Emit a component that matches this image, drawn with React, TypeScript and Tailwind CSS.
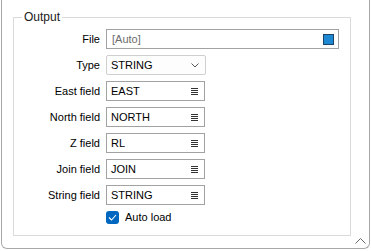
import React from "react";

const ListIcon = () => (
  <div className="flex flex-col gap-[1px] shrink-0">
    <div className="w-[7px] h-[1px] bg-[#333]" />
    <div className="w-[7px] h-[1px] bg-[#333]" />
    <div className="w-[7px] h-[1px] bg-[#333]" />
    <div className="w-[7px] h-[1px] bg-[#333]" />
  </div>
);

interface RowProps {
  label: string;
  children: React.ReactNode;
}

const Row: React.FC<RowProps> = ({ label, children }) => (
  <div className="flex items-center h-[20px]">
    <div className="w-[86px] text-right whitespace-nowrap">{label}</div>
    <div className="ml-[6px] flex">{children}</div>
  </div>
);

const FieldBox: React.FC<{ value: string }> = ({ value }) => (
  <div className="w-[99px] h-[20px] border border-[#a2a2a2] bg-white flex items-center pl-[4px] pr-[6px]">
    <span className="flex-1">{value}</span>
    <ListIcon />
  </div>
);

const fields = [
  { label: "East field", value: "EAST" },
  { label: "North field", value: "NORTH" },
  { label: "Z field", value: "RL" },
  { label: "Join field", value: "JOIN" },
  { label: "String field", value: "STRING" },
];

export default function App() {
  return (
    <div className="w-[371px] h-[251px] bg-white font-['Liberation_Sans',sans-serif] text-[11px] text-black leading-none">
      <div className="ml-[1px] w-[369px] h-[249px] border-x border-b border-[#a8a8a8] rounded-b-[6px] pl-[11px] pt-[9px]">
        <fieldset className="w-[338px] h-[227px] border border-[#dadada] pt-[4px]">
          <legend className="ml-[8px] px-[2px] leading-[16px] text-[12px] text-[#1a1a1a]">Output</legend>
          <div className="flex flex-col gap-[6px]">
            <Row label="File">
              <div className="w-[233px] h-[20px] border border-[#a2a2a2] bg-white flex items-center pl-[5px] pr-[4px]">
                <span className="flex-1 text-[#6d6d6d]">[Auto]</span>
                <div className="w-[11px] h-[11px] bg-[#1f88d2] border border-[#1d4466]" />
              </div>
            </Row>
            <Row label="Type">
              <div className="w-[100px] h-[20px] border border-[#cfcfcf] rounded-[2px] bg-[#fdfdfd] flex items-center pl-[4px] pr-[6px]">
                <span className="flex-1">STRING</span>
                <svg width="8" height="5" viewBox="0 0 8 5">
                  <path d="M0.5 0.5 L4 4 L7.5 0.5" fill="none" stroke="#555" strokeWidth="1" />
                </svg>
              </div>
            </Row>
            {fields.map((f) => (
              <Row key={f.label} label={f.label}>
                <FieldBox value={f.value} />
              </Row>
            ))}
            <div className="flex items-center h-[13px] ml-[92px]">
              <div className="w-[13px] h-[13px] rounded-[3px] bg-[#0067c0] flex items-center justify-center">
                <svg width="9" height="7" viewBox="0 0 9 7">
                  <path d="M1 3.5 L3.5 6 L8 1" fill="none" stroke="#fff" strokeWidth="1.1" />
                </svg>
              </div>
              <span className="ml-[6px]">Auto load</span>
            </div>
          </div>
        </fieldset>
        <div className="flex justify-end pr-[3px] mt-[2px]">
          <svg width="11" height="6" viewBox="0 0 11 6">
            <path d="M0.5 5.5 L5.5 0.5 L10.5 5.5" fill="none" stroke="#666" strokeWidth="1" />
          </svg>
        </div>
      </div>
    </div>
  );
}
